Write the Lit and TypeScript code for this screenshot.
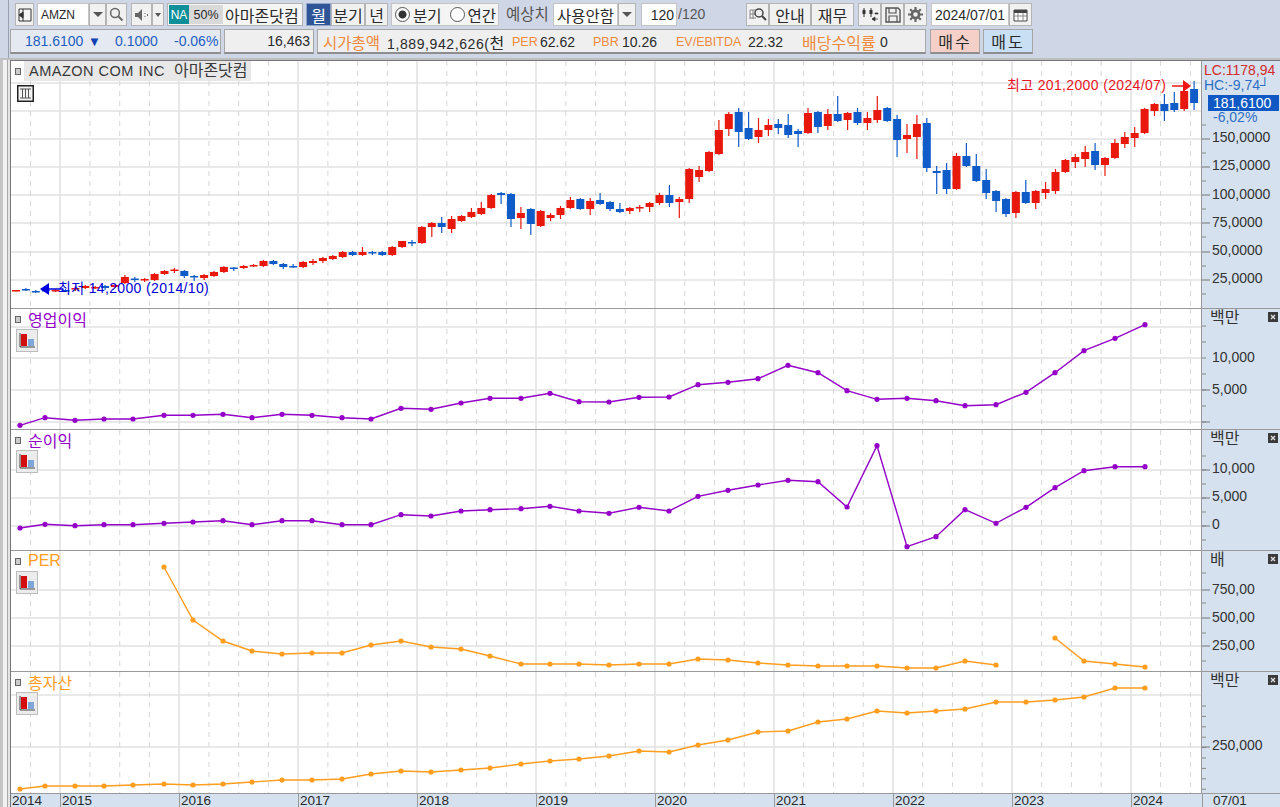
import { LitElement, css, html, svg } from 'lit';
import { customElement } from 'lit/decorators.js';

const RED = '#e8190c';
const BLUE = '#0f5bc8';
const PURPLE = '#9400c8';
const ORANGE = '#ff9d1e';

// [wick top, body top, body bottom, wick bottom, up?] in page pixels, one per month
const CANDLES: [number, number, number, number, number][] = [
  [290, 290, 291.5, 291.5, 1], [288, 289, 290.5, 291, 0], [290, 291, 292, 293, 0], [289, 290, 291, 292, 0],
  [289, 290, 291, 292, 1], [289, 290, 291, 292, 0], [287, 288, 289, 291, 1], [285, 286, 288, 289, 1],
  [286, 287, 288, 289, 1], [285, 286, 288, 290, 0], [284, 285, 287, 288, 1], [275, 277, 283, 284, 1],
  [277, 278.5, 280, 282, 0], [278, 279, 280, 282, 1], [273, 274, 280, 281, 1], [270, 271, 274, 275, 1],
  [268, 269.5, 271, 273, 1], [270, 271, 276, 278, 0], [275, 276, 277.5, 281, 0], [274, 275, 278, 280, 1],
  [271, 272, 276, 277, 1], [266, 267, 272, 273, 1], [267, 267.5, 269, 271, 0], [265, 266, 268, 269, 1],
  [264, 265, 266.5, 267, 1], [260, 261, 266, 267, 1], [260, 261, 264, 265, 0], [263, 264, 267, 269, 0],
  [264, 266, 267, 268, 0], [261, 262, 267, 268, 1], [259, 261, 263, 265, 1], [257, 258, 261, 263, 1],
  [255, 256, 259, 260, 1], [251, 252, 257, 258, 1], [251, 252, 255, 256, 0], [247, 252, 255, 256, 1],
  [251, 252, 253.5, 255, 0], [251, 252, 255, 256, 0], [246, 247, 255, 256, 1], [241, 241, 247, 248, 1],
  [240, 242, 243.5, 246, 0], [226, 227, 243, 244, 1], [222, 223, 227, 237, 1], [217, 223, 227, 233, 0],
  [216, 219, 229, 233, 1], [215, 216, 221, 222, 1], [208, 212, 217, 218, 1], [202, 208, 214, 215, 1],
  [194, 195, 208, 209, 1], [192, 193, 195, 204, 0], [193, 194, 219, 227, 0], [207, 213, 218, 229, 1],
  [208, 209, 224, 235, 0], [210, 211, 226, 227, 1], [213, 215, 218, 221, 1], [206, 208, 215, 219, 1],
  [197, 200, 208, 209, 1], [198, 199, 209, 210, 0], [198, 201, 209, 215, 1], [193, 200, 204, 205, 0],
  [201, 202, 209, 211, 0], [203, 209, 212, 213, 0], [207, 208, 211, 214, 1], [205, 207, 208, 212, 1],
  [202, 203, 207, 212, 1], [193, 195, 203, 205, 1], [185, 195, 203, 207, 0], [197, 199, 202, 218, 1],
  [168, 169, 199, 203, 1], [166, 170, 177, 182, 1], [151, 152, 171, 172, 1], [120, 130, 154, 155, 1],
  [112, 114, 129, 136, 1], [108, 112, 132, 147, 0], [112, 128, 139, 140, 0], [118, 130, 137, 143, 1],
  [119, 125, 130, 136, 1], [119, 124, 128, 134, 0], [114, 125, 135, 138, 0], [129, 131, 134, 147, 0],
  [108, 113, 133, 134, 1], [111, 112, 127, 133, 0], [109, 114, 126, 130, 1], [96, 114, 121, 122, 0],
  [112, 113, 120, 130, 1], [108, 112, 123, 125, 0], [112, 118, 123, 130, 1], [96, 110, 120, 123, 1],
  [107, 108, 121, 122, 0], [115, 119, 140, 157, 0], [124, 135, 139, 153, 1], [115, 124, 137, 159, 1],
  [118, 123, 168, 172, 0], [166, 171, 173, 194, 0], [163, 170, 189, 194, 0], [153, 156, 189, 190, 1],
  [143, 156, 166, 167, 0], [154, 166, 181, 182, 0], [169, 180, 193, 199, 0], [190, 191, 201, 212, 0],
  [198, 199, 214, 217, 0], [191, 192, 213, 218, 1], [180, 192, 203, 204, 0], [190, 191, 203, 209, 1],
  [182, 189, 193, 199, 1], [169, 172, 191, 194, 1], [159, 160, 172, 173, 1], [154, 157, 162, 168, 1],
  [146, 152, 159, 167, 1], [143, 151, 165, 170, 0], [157, 158, 165, 176, 1], [139, 143, 158, 159, 1],
  [132, 137, 144, 148, 1], [127, 133, 138, 147, 1], [108, 109, 133, 134, 1], [103, 104, 111, 116, 1],
  [94, 104, 111, 121, 0], [92, 103, 110, 112, 0], [90, 91, 109, 111, 1], [81, 89, 103, 110, 0],
];

const QX = [20, 45, 75, 104, 133, 164, 193, 223, 252, 282, 312, 342, 371, 401, 431, 461, 490, 521, 550, 579,
  609, 639, 669, 698, 728, 758, 788, 818, 847, 877, 907, 936, 965, 996, 1026, 1055, 1084, 1115, 1145];

const OP = [425.3, 417.7, 420.3, 419, 419, 415.3, 415.3, 414.3, 417.7, 414.3, 415.3, 417.7, 419, 408.3, 409.3, 403, 398.3, 398.3, 393.3, 401.7,
  402, 397.3, 397, 384.7, 382.3, 378.7, 365.3, 372.7, 390.7, 399.3, 398.3, 400.7, 405.7, 404.7, 392.3, 372.7, 350.7, 338.3, 324.7];
const NET = [528, 524.3, 525.7, 524.7, 524.7, 523.3, 522, 520.7, 524.7, 520.7, 520.7, 524.7, 524.7, 514.7, 516, 511, 509.7, 508.7, 506.3, 511,
  513.3, 507.3, 511, 496.3, 490.3, 485, 480.3, 481.7, 507, 445.7, 546.7, 536.7, 509.7, 523.3, 507.3, 487.7, 470.7, 466.7, 466.7];
const PER: (number | null)[] = [null, null, null, null, null, 567, 620, 641, 651, 654, 653, 653, 645, 641, 647, 649, 656, 664, 664, 664,
  665, 664, 664, 659, 660, 663, 665, 666, 666, 666, 668, 668, 661, 665, null, 638, 661, 664, 667];
const ASSET = [789, 786, 786, 786, 785, 784, 785, 784, 782, 780, 780, 779, 774, 771, 772, 770, 768, 764, 761, 759,
  756, 751, 752, 745, 740, 732, 731, 722, 719, 711, 713, 711, 709, 702, 702, 700, 697, 688, 688];

const YEAR_X = [60, 179, 298, 417, 536, 655, 774, 893, 1012, 1131];
const DASH_X = Array.from({ length: 41 }, (_, k) => 30.5 + k * 29.74).filter(
  (x) => !YEAR_X.some((y) => Math.abs(x - y) < 5)
);

const barIcon = html`<svg class="bar-icon" width="22" height="23" viewBox="0 0 22 23">
  <rect x="0.5" y="0.5" width="21" height="22" fill="#ececec" stroke="#bdbdbd" />
  <rect x="5" y="5" width="6" height="12" fill="#d40d0d" />
  <rect x="12" y="10" width="6" height="7" fill="#7fa6d8" />
  <path d="M4 4v14h15" fill="none" stroke="#444" stroke-width="1" />
</svg>`;

const marker = html`<span class="marker"></span>`;

const closeIcon = html`<svg class="close" width="10" height="10" viewBox="0 0 10 10">
  <rect width="10" height="10" fill="#3a3a3a" />
  <path d="M3 3l4 4M7 3l-4 4" stroke="#ddd" stroke-width="1.4" />
</svg>`;

function plotSvg(top: number, height: number, gridY: number[], body: unknown) {
  return html`<svg class="plot" width="1190" height=${height} viewBox="11 ${top} 1190 ${height}">
    ${gridY.map((y) => svg`<line x1="11" x2="1201" y1=${y} y2=${y} stroke="#e2e2e2" stroke-width="1.5" />`)}
    ${YEAR_X.map((x) => svg`<line x1=${x} x2=${x} y1=${top} y2=${top + height} stroke="#e0e0e0" stroke-width="1.5" />`)}
    ${DASH_X.map((x) => svg`<line x1=${x} x2=${x} y1=${top} y2=${top + height} stroke="#d6d6d6" stroke-dasharray="5 5" />`)}
    ${body}
  </svg>`;
}

function lineSeries(values: (number | null)[], color: string) {
  const runs: string[] = [];
  let run: string[] = [];
  values.forEach((v, i) => {
    if (v === null) {
      if (run.length) runs.push(run.join(' '));
      run = [];
    } else run.push(`${QX[i]},${v}`);
  });
  if (run.length) runs.push(run.join(' '));
  return svg`
    ${runs.map((p) => svg`<polyline points=${p} fill="none" stroke=${color} stroke-width="1.4" />`)}
    ${values.map((v, i) => (v === null ? null : svg`<circle cx=${QX[i]} cy=${v} r="2.6" fill=${color} />`))}
  `;
}

function candleSeries() {
  return CANDLES.map(([hi, top, bot, lo, up], i) => {
    const x = 16 + i * 9.9;
    const c = up ? RED : BLUE;
    return svg`<line x1=${x} x2=${x} y1=${hi} y2=${lo} stroke=${c} stroke-width="1.2" />
      <rect x=${x - 4} y=${top} width="8" height=${Math.max(bot - top, 1.5)} fill=${c} />`;
  });
}

// long ticks at labelled values, short ones at the positions between
function axisTicks(top: number, height: number, major: number[], minor: number[]) {
  return html`<svg class="ticks" width="12" height=${height} viewBox="0 ${top} 12 ${height}">
    ${major.map((y) => svg`<line x1="0" x2="8" y1=${y} y2=${y} stroke="#777" />`)}
    ${minor.map((y) => svg`<line x1="0" x2="4" y1=${y} y2=${y} stroke="#888" />`)}
  </svg>`;
}

function steps(from: number, to: number, step: number) {
  const out: number[] = [];
  for (let y = from; y < to; y += step) out.push(y);
  return out;
}

@customElement('app-root')
export class AppRoot extends LitElement {
  private renderToolbar() {
    return html`
      <div class="toolbar">
        <div class="row first">
          <button class="btn w18">
            <svg width="14" height="14" viewBox="0 0 14 14"><path d="M1 1h12v12H1z" fill="#f5f5f5" stroke="#333" /><path d="M5 1v12M1 7l4-3v6z" fill="#333" stroke="#333" /></svg>
          </button>
          <div class="input code">AMZN</div>
          <button class="btn w16"><span class="down"></span></button>
          <button class="btn w21">
            <svg width="15" height="15" viewBox="0 0 15 15"><circle cx="6" cy="6" r="4.4" fill="none" stroke="#666" stroke-width="1.5" /><path d="M9.5 9.5l4 4" stroke="#666" stroke-width="2" /></svg>
          </button>
          <button class="btn w21 ml4">
            <svg width="16" height="14" viewBox="0 0 16 14"><path d="M1 5h3l4-4v12l-4-4H1z" fill="#666" /><path d="M11 5v1M11 8v1M13.5 6v2" stroke="#666" /></svg>
          </button>
          <button class="btn w11"><span class="down small"></span></button>
          <div class="name-box">
            <span class="na">NA</span>
            <span class="pct">50%</span>
            <span class="name">아마존닷컴</span>
          </div>
          <button class="btn active w24 ml3">월</button>
          <button class="btn w34">분기</button>
          <button class="btn w23">년</button>
          <div class="radios">
            <span class="radio on"></span><span class="radio-label">분기</span>
            <span class="radio second"></span><span class="radio-label">연간</span>
          </div>
          <span class="expect">예상치</span>
          <div class="input select">사용안함</div>
          <button class="btn w17"><span class="down"></span></button>
          <div class="input count">120</div>
          <span class="total">/120</span>
          <button class="btn w23 far">
            <svg width="18" height="15" viewBox="0 0 18 15"><path d="M1 3h9M1 7h6M1 11h6M1 3v9M4 3v9" stroke="#888" fill="none" /><circle cx="10" cy="6" r="4" fill="#f0f0f0" stroke="#444" stroke-width="1.5" /><path d="M13 9l4 4" stroke="#444" stroke-width="2" /></svg>
          </button>
          <button class="btn w42">안내</button>
          <button class="btn w43">재무</button>
          <button class="btn w23 ml4">
            <svg width="18" height="16" viewBox="0 0 18 16"><path d="M3 1v9M10 1v9" stroke="#333" /><rect x="1.5" y="3" width="3" height="4" fill="#333" /><rect x="8.5" y="3" width="3" height="4" fill="#333" /><path d="M14 6h3v1h-3zM11 12h6M11 12l3-2v4z" fill="#333" stroke="#333" stroke-width="0.7" /></svg>
          </button>
          <button class="btn w22">
            <svg width="16" height="16" viewBox="0 0 16 16"><path d="M1 1h12l2 2v12H1z" fill="#eee" stroke="#555" stroke-width="1.4" /><path d="M4 1v5h7V1M4 15v-6h8v6" fill="none" stroke="#555" stroke-width="1.2" /></svg>
          </button>
          <button class="btn w23">
            <svg width="15" height="15" viewBox="0 0 15 15"><circle cx="7.5" cy="7.5" r="3.6" fill="none" stroke="#666" stroke-width="2.6" /><path d="M7.5 0v3M7.5 12v3M0 7.5h3M12 7.5h3M2.2 2.2l2 2M10.8 10.8l2 2M12.8 2.2l-2 2M4.2 10.8l-2 2" stroke="#666" stroke-width="2.2" /></svg>
          </button>
          <div class="input date">2024/07/01</div>
          <button class="btn w23">
            <svg width="15" height="14" viewBox="0 0 15 14"><path d="M1 2h13v11H1z" fill="#fff" stroke="#444" /><path d="M1 2h13v3H1z" fill="#444" /><path d="M1 8h13M5 5v8M10 5v8" stroke="#888" /></svg>
          </button>
        </div>
        <div class="row second-row">
          <div class="box quote">
            <span class="q1">181.6100</span>
            <span class="q2">▼</span>
            <span class="q3">0.1000</span>
            <span>-0.06%</span>
          </div>
          <div class="box volume">16,463</div>
          <div class="box stats">
            <span class="lab">시가총액</span><span class="wide">1,889,942,626(<span class="ko">천</span></span>
            <span class="lab en">PER</span><span>62.62</span>
            <span class="lab en">PBR</span><span>10.26</span>
            <span class="lab en">EV/EBITDA</span><span>22.32</span>
            <span class="lab ko">배당수익률</span><span>0</span>
          </div>
          <button class="box buy">매수</button>
          <button class="box sell">매도</button>
        </div>
      </div>
    `;
  }

  private renderMain() {
    const overlay = svg`
      ${candleSeries()}
      <path d="M1172 86h12" stroke="#f01414" stroke-width="1.5" />
      <path d="M1183 80l8 6-8 6z" fill="#f01414" />
      <path d="M49 289h14" stroke="#0000e0" stroke-width="1.5" />
      <path d="M49 283l-9 6 9 6z" fill="#0000e0" />
    `;
    return html`
      <div class="panel main">
        ${plotSvg(61, 247, [83, 111, 139, 167, 195, 223, 252, 280], overlay)}
        <div class="title main-title">${marker}<span class="title-box">AMAZON COM INC&nbsp; <span class="ko">아마존닷컴</span></span></div>
        <svg class="table-icon" width="17" height="17" viewBox="0 0 17 17">
          <rect x="0.75" y="0.75" width="15.5" height="15.5" fill="#f3f3f3" stroke="#222" stroke-width="1.5" />
          <path d="M3 4h11M3 13h11M5.5 4v9M8.5 4v9M11.5 4v9" stroke="#555" />
        </svg>
        <span class="note high">최고 201,2000 (2024/07)</span>
        <span class="note low">최저 14,2000 (2014/10)</span>
        <div class="axis">
          ${axisTicks(61, 247, [139, 167, 195, 223, 252, 280], [125, 153, 181, 209, 237, 266, 294])}
          <span class="lc">LC:1178,94</span>
          <span class="hc">HC:-9,74┘</span>
          <span class="last">181,6100</span>
          <span class="change">-6,02%</span>
          ${[['150,0000', 137], ['125,0000', 165], ['100,0000', 194], ['75,0000', 222], ['50,0000', 250], ['25,0000', 278]].map(
            ([t, y]) => html`<span class="tick" style="top:${(y as number) - 61 - 9}px">${t}</span>`
          )}
        </div>
      </div>
    `;
  }

  private renderPanel(
    top: number,
    height: number,
    name: string,
    color: string,
    unit: string,
    gridY: number[],
    values: (number | null)[],
    labels: [string, number][],
    minor: number[]
  ) {
    return html`
      <div class="panel" style="height:${height + 1}px">
        ${plotSvg(top, height, gridY, lineSeries(values, color))}
        <div class="title">${marker}<span class="series" style="color:${color}">${name}</span></div>
        ${barIcon}
        <div class="axis">
          ${axisTicks(top, height, labels.length ? gridY.slice(-labels.length) : gridY, minor)}
          <span class="unit">${unit}</span>
          ${closeIcon}
          ${labels.map(([t, y]) => html`<span class="tick" style="top:${y - top - 9}px">${t}</span>`)}
        </div>
      </div>
    `;
  }

  render() {
    return html`
      ${this.renderToolbar()}
      <div class="stage">
        <div class="charts">
          ${this.renderMain()}
          ${this.renderPanel(309, 120, '영업이익', PURPLE, '백만', [327, 358, 390, 422], OP, [['10,000', 357], ['5,000', 389]], steps(326, 429, 16))}
          ${this.renderPanel(430, 120, '순이익', PURPLE, '백만', [470, 498, 526], NET, [['10,000', 468], ['5,000', 496], ['0', 524]], steps(456, 550, 14))}
          ${this.renderPanel(551, 120, 'PER', ORANGE, '배', [590, 618, 646], PER, [['750,00', 589], ['500,00', 617], ['250,00', 645]], [573, 603, 633, 661])}
          ${this.renderPanel(672, 121, '총자산', ORANGE, '백만', [695, 747], ASSET, [['250,000', 745]], steps(706, 793, 10.4))}
        </div>
        <div class="dates">
          <div class="years">
            <span class="y0">2014</span>
            ${YEAR_X.map((x, i) => html`<span class="year" style="left:${x - 11}px">${2015 + i}</span>`)}
          </div>
          <span class="cursor">07/01</span>
        </div>
      </div>
    `;
  }

  static styles = css`
    :host {
      display: block;
      width: 1280px;
      height: 807px;
      overflow: hidden;
      background: #cfd6e6;
      font: 14px 'Liberation Sans', 'Noto Sans CJK KR', sans-serif;
      color: #2a2a2a;
    }
    .toolbar {
      height: 58px;
      padding-top: 3px;
      box-sizing: border-box;
      background: linear-gradient(90deg, #cfd6e6 0 8px, #9aa0ac 8px 9px, #cfd6e6 9px);
    }
    .row {
      display: flex;
      height: 23px;
      padding-left: 15px;
    }
    .second-row {
      height: 25px;
      margin-top: 3px;
      padding-left: 10px;
    }
    button {
      font: inherit;
      color: inherit;
      padding: 0;
      margin: 0;
      cursor: pointer;
    }
    .btn {
      display: flex;
      align-items: center;
      justify-content: center;
      box-sizing: border-box;
      height: 100%;
      background: #f1f1f1;
      border: 1px solid #b4b4b4;
      font-size: 16px;
    }
    .btn.active {
      background: #2f5597;
      color: #fff;
      border-color: #8fa3c8;
    }
    .w11 { width: 12px; }
    .w16 { width: 17px; }
    .w17 { width: 18px; }
    .w18 { width: 19px; }
    .w21 { width: 21px; }
    .w22 { width: 23px; }
    .w23 { width: 23px; }
    .w24 { width: 25px; }
    .w34 { width: 34px; }
    .w42 { width: 42px; }
    .w43 { width: 43px; }
    .ml3 { margin-left: 3px; }
    .ml4 { margin-left: 4px; }
    .far { margin-left: 38px; }
    .down {
      width: 0;
      height: 0;
      border: 5px solid transparent;
      border-top: 5px solid #555;
      border-bottom: 0;
    }
    .down.small {
      border-width: 4px 3px 0;
    }
    .input {
      display: flex;
      align-items: center;
      box-sizing: border-box;
      height: 100%;
      background: #fff;
      border: 1px solid #c4c4c4;
    }
    .code {
      width: 52px;
      margin-left: 3px;
      padding-left: 3px;
      font-size: 12px;
    }
    .name-box {
      display: flex;
      align-items: center;
      box-sizing: border-box;
      width: 136px;
      margin-left: 3px;
      padding: 1px;
      background: #f6f6f6;
      border: 1px solid #b4b4b4;
    }
    .na {
      width: 20px;
      height: 100%;
      line-height: 20px;
      text-align: center;
      background: #0e8f9a;
      color: #fff;
      font-size: 12px;
    }
    .pct {
      width: 34px;
      height: 100%;
      line-height: 20px;
      text-align: center;
      background: #d9d9d9;
      font-size: 12.5px;
    }
    .name {
      margin-left: 2px;
      font-size: 16px;
      white-space: nowrap;
    }
    .radios {
      display: flex;
      align-items: center;
      box-sizing: border-box;
      width: 108px;
      margin-left: 3px;
      padding-left: 3px;
      background: #f4f4f4;
      border: 1px solid #c4c4c4;
    }
    .radio {
      box-sizing: border-box;
      width: 15px;
      height: 15px;
      border: 1px solid #555;
      border-radius: 50%;
      background: #fff;
    }
    .radio.on {
      background: radial-gradient(circle, #333 0 3.5px, #fff 4.5px);
    }
    .radio.second {
      margin-left: 8px;
    }
    .radio-label {
      margin-left: 3px;
      font-size: 15.5px;
      white-space: nowrap;
    }
    .expect {
      width: 43px;
      margin-left: 7px;
      line-height: 23px;
      font-size: 15.5px;
      white-space: nowrap;
      color: #555;
    }
    .select {
      width: 65px;
      margin-left: 4px;
      padding-left: 3px;
      font-size: 15.5px;
      white-space: nowrap;
    }
    .count {
      justify-content: flex-end;
      width: 36px;
      margin-left: 5px;
      padding-right: 2px;
    }
    .total {
      width: 30px;
      margin-left: 1px;
      line-height: 23px;
      color: #555;
    }
    .date {
      width: 78px;
      margin-left: 4px;
      padding-left: 3px;
      white-space: nowrap;
    }
    .box {
      display: flex;
      align-items: center;
      box-sizing: border-box;
      height: 100%;
      border: 1px solid #a6a6a6;
      border-bottom: 2px solid #8e8e8e;
      background: #efefef;
      white-space: nowrap;
    }
    .quote {
      width: 211px;
      padding-left: 14px;
      background: #e4e9f2;
      color: #1f5fbf;
    }
    .q1 { width: 63px; }
    .q2 { width: 27px; color: #0f3fb0; font-size: 13px; }
    .q3 { width: 59px; }
    .volume {
      justify-content: flex-end;
      width: 90px;
      margin-left: 3px;
      padding-right: 3px;
    }
    .stats {
      display: grid;
      grid-template-columns: 64px 125px 28px 53px 29px 54px 72px 54px 78px auto;
      width: 609px;
      margin-left: 3px;
      padding-left: 5px;
    }
    .wide {
      letter-spacing: 0.6px;
    }
    .ko {
      font-size: 16px;
    }
    .title-box .ko {
      letter-spacing: 0;
    }
    .lab {
      color: #f08a3c;
      font-size: 15.5px;
    }
    .lab.en {
      font-size: 12.5px;
    }
    .lab.ko {
      font-size: 16px;
    }
    .buy, .sell {
      justify-content: center;
      width: 50px;
      font-size: 16px;
      letter-spacing: 2px;
    }
    .buy {
      margin-left: 4px;
      background: #f4d0c9;
    }
    .sell {
      margin-left: 3px;
      background: #c9dff3;
    }
    .stage {
      box-sizing: border-box;
      height: 749px;
      padding: 1px 0 0 11px;
      border-top: 2px solid #bfbfbf;
      background: linear-gradient(90deg, #c4c4c4 0 3px, #f2f2f2 3px 7px, #a8a8a8 7px 8px, #e4e4e4 8px 10px, #777 10px 11px);
      background-clip: padding-box;
    }
    .charts {
      display: flex;
      flex-direction: column;
    }
    .panel {
      position: relative;
      display: flex;
      box-sizing: border-box;
      border-bottom: 1px solid #999;
      background: #fff;
    }
    .panel.main {
      height: 248px;
    }
    .plot {
      display: block;
      flex: none;
    }
    .axis {
      position: relative;
      flex: 1;
      background: #d5e1ef;
      border-left: 1px solid #999;
    }
    .ticks {
      position: absolute;
      top: 0;
      left: 0;
    }
    .tick {
      position: absolute;
      left: 10px;
      line-height: 18px;
      white-space: nowrap;
      color: #333;
    }
    .lc, .hc, .last, .change {
      position: absolute;
      white-space: nowrap;
      line-height: 16px;
    }
    .lc { top: 1px; left: 2px; color: #d42a2a; }
    .hc { top: 16px; left: 2px; color: #2d6fc4; }
    .last {
      top: 34px;
      left: 6px;
      width: 71px;
      box-sizing: border-box;
      padding-left: 5px;
      background: #1059c4;
      color: #fff;
    }
    .change { top: 48px; left: 11px; color: #2d6fc4; }
    .unit {
      position: absolute;
      top: 0;
      left: 8px;
      line-height: 18px;
      font-size: 16px;
      color: #333;
    }
    .close {
      position: absolute;
      top: 3px;
      right: 2px;
    }
    .title {
      position: absolute;
      top: 1px;
      left: 4px;
      display: flex;
      align-items: center;
      height: 18px;
    }
    .main-title {
      top: 0;
      height: 20px;
    }
    .marker {
      box-sizing: border-box;
      width: 6px;
      height: 7px;
      background: #ccc;
      border: 1px solid #666;
    }
    .title-box {
      margin-left: 3px;
      padding: 0 3px 0 5px;
      line-height: 20px;
      background: #e8e8e8;
      font-size: 14.5px;
      letter-spacing: 0.5px;
      color: #3a3a3a;
      white-space: nowrap;
    }
    .series {
      margin-left: 7px;
      font-size: 16px;
      white-space: nowrap;
    }
    .table-icon {
      position: absolute;
      top: 24px;
      left: 6px;
    }
    .bar-icon {
      position: absolute;
      top: 20px;
      left: 5px;
    }
    .note {
      position: absolute;
      white-space: nowrap;
      line-height: 18px;
      letter-spacing: 0.35px;
    }
    .note.high {
      top: 15px;
      left: 996px;
      color: #e8141e;
    }
    .note.low {
      top: 218px;
      left: 47px;
      color: #0000d8;
    }
    .dates {
      display: flex;
      height: 13px;
      overflow: hidden;
      background: #d5e1ef;
      line-height: 13px;
      font-size: 13.5px;
    }
    .years {
      position: relative;
      width: 1191px;
      flex: none;
    }
    .y0 {
      padding-left: 1px;
    }
    .year {
      position: absolute;
      top: 0;
      padding-left: 1px;
      border-left: 1px solid #999;
    }
    .cursor {
      padding-left: 10px;
      border-left: 1px solid #999;
    }
  `;
}
